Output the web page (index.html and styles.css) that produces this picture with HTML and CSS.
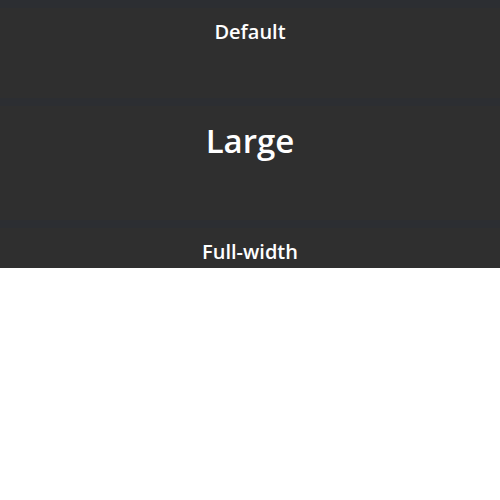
FILE: index.html
```html
<!DOCTYPE html>
<html lang="en">
<head>
<meta charset="utf-8">
<title>Buttons</title>
<link rel="stylesheet" href="styles.css">
</head>
<body>
<div class="stack">
  <div class="block block-default"><span class="label">Default</span></div>
  <div class="block block-large"><span class="label">Large</span></div>
  <div class="block block-full"><span class="label">Full-width</span></div>
</div>
</body>
</html>
```

FILE: styles.css
```css
html, body {
  margin: 0;
  padding: 0;
  background: #ffffff;
}

.stack {
  display: flex;
  flex-direction: column;
  gap: 8px;
  padding-top: 8px;
  background: #2c2e32;
}

.block {
  box-sizing: border-box;
  background: #2f2f2f;
  color: #ffffff;
  text-align: center;
  font-family: "Open Sans", "Noto Sans", sans-serif;
  font-weight: 600;
}

.label {
  display: block;
  line-height: normal;
}

.block-default {
  height: 90px;
  padding-top: 10px;
  font-size: 20px;
}

.block-large {
  height: 114px;
  padding-top: 12px;
  font-size: 33px;
}

.block-full {
  height: 40px;
  padding-top: 10px;
  font-size: 20px;
}
```
